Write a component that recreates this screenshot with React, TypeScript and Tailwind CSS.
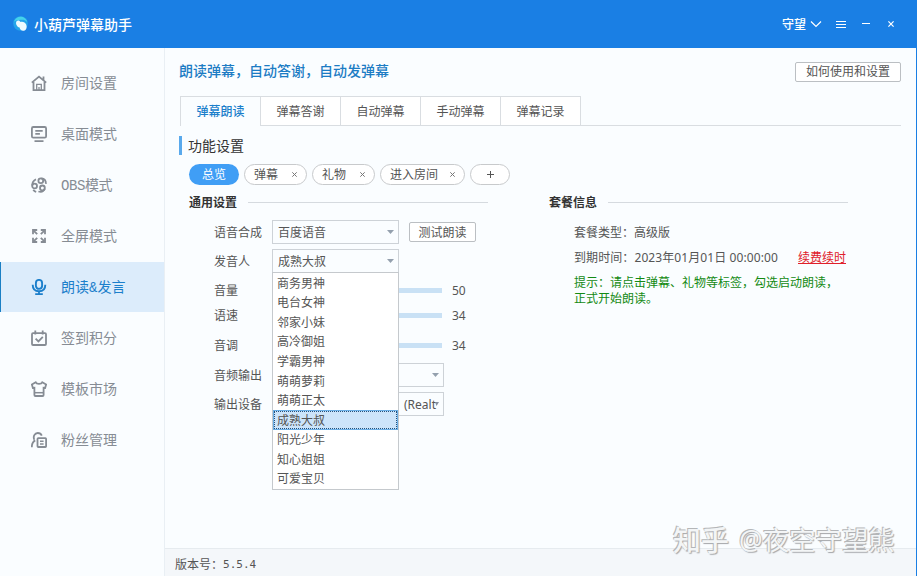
import { ReactNode } from "react";
import clsx from "clsx";

interface MenuItem {
  label: string;
  latin?: boolean;
  icon: ReactNode;
}

interface SelectProps {
  value?: string;
  className?: string;
}

interface RowProps {
  label: string;
  className?: string;
  children?: ReactNode;
}

const TABS = ["弹幕朗读", "弹幕答谢", "自动弹幕", "手动弹幕", "弹幕记录"];

const VOICES = [
  "商务男神",
  "电台女神",
  "邻家小妹",
  "高冷御姐",
  "学霸男神",
  "萌萌萝莉",
  "萌萌正太",
  "成熟大叔",
  "阳光少年",
  "知心姐姐",
  "可爱宝贝",
];

const MENU: MenuItem[] = [
  {
    label: "房间设置",
    icon: (
      <>
        <path d="M.8 7.600 8 1.600l7.200 6M12.500 5V1.500" />
        <path d="M2.500 7v8.100h11V7" />
        <path d="M5.700 15V9.400h4.600V15M8 12v3" strokeWidth="1.300" />
      </>
    ),
  },
  {
    label: "桌面模式",
    icon: (
      <>
        <rect x="0.900" y="1" width="14.200" height="10.600" rx="1.400" />
        <path d="M4.300 4.900h7.400M4.300 7.800h4.600M3.500 15.100h9" />
      </>
    ),
  },
  {
    label: "OBS模式",
    latin: true,
    icon: (
      <>
        <circle cx="3.600" cy="9" r="2.400" />
        <path d="M1.200 8.600C1.200 5.400 2.600 3.300 5 2.300" />
        <circle cx="9.800" cy="3.800" r="2.400" />
        <path d="M10.400 1.300c2.900.2 4.600 2.200 4.500 5.600" />
        <circle cx="11.400" cy="10.900" r="2.400" />
        <path d="M13.700 11.800c-1 2.600-3.400 3.600-6.300 2.700" />
        <path d="M2.200 12.800c.9 1 1.800 1.700 3 2" />
      </>
    ),
  },
  {
    label: "全屏模式",
    icon: (
      <>
        <path d="M6.200 2H2v4.200M9.800 2H14v4.200M6.200 14H2V9.800M9.800 14H14V9.800" />
        <path d="m2.300 2.300 3.900 3.900M13.700 2.300 9.800 6.200M2.300 13.700l3.900-3.900M13.700 13.700 9.800 9.800" />
      </>
    ),
  },
  {
    label: "朗读&发言",
    latin: true,
    icon: (
      <>
        <rect x="4.900" y="0.900" width="6.200" height="9" rx="3.100" strokeWidth="1.900" />
        <path d="M1.700 5.800c0 4.300 2.400 6.500 6.300 6.500s6.300-2.200 6.300-6.500M8 12.300V15M4.200 15.100h7.600" strokeWidth="1.900" />
      </>
    ),
  },
  {
    label: "签到积分",
    icon: (
      <>
        <rect x="1" y="3.200" width="14" height="11.800" rx="1" />
        <path d="M4.300.6v4M11.700.6v4M4.600 8.700l2.800 2.700 4.400-4.600" />
      </>
    ),
  },
  {
    label: "模板市场",
    icon: (
      <>
        <path d="M4.700 1.300.9 3.500l1 3.500 1.500-.2v7.200c0 .6.400 1 1 1h7.200c.6 0 1-.4 1-1V6.800l1.500.2 1-3.500-3.800-2.200C10.400 3.300 5.600 3.300 4.700 1.300z" />
        <path d="M3.600 11.700h8.800" strokeWidth="1.500" />
      </>
    ),
  },
  {
    label: "粉丝管理",
    icon: (
      <>
        <path d="M3.200 7.600C1.900 4.300 3.600 1 6.800 1c2 0 3.300 1 4 2.600M4.200 8.400C1.900 9.700.8 12 .8 15.200" />
        <rect x="6.500" y="6.200" width="8.600" height="8.800" rx="0.800" />
        <path d="M9 9.300h3.600M9 12h3.600" strokeWidth="1.400" />
      </>
    ),
  },
];

const Arrow = () => (
  <svg className="shrink-0" width="7" height="4" viewBox="0 0 7 4">
    <path d="M0 0h7L3.500 4z" fill="#94a0ae" />
  </svg>
);

const Select = ({ value, className }: SelectProps) => (
  <div
    className={clsx(
      "flex h-6 items-center justify-between border border-[#cdd2d7] pl-[5px] pr-1",
      className
    )}
  >
    <span className="pt-0.5">{value}</span>
    <Arrow />
  </div>
);

const SliderTrack = () => <div className="h-[5px] w-[170px] bg-[#c9e1f5]" />;

const Row = ({ label, className, children }: RowProps) => (
  <div className={clsx("flex items-center", className)}>
    <span className="w-[58px] shrink-0 pt-0.5">{label}</span>
    {children}
  </div>
);

const GroupTitle = ({ children }: { children: ReactNode }) => (
  <div className="flex h-[18px] items-center gap-[11px]">
    <span className="pt-0.5 font-bold text-[#333]">{children}</span>
    <span className="h-px w-[240px] bg-[#d5dadf]" />
  </div>
);

const Tag = ({ label, className }: { label: string; className: string }) => (
  <div
    className={clsx(
      "flex h-[21px] items-center justify-between rounded-full border border-[#c8cacc] bg-white pl-[9px] pr-[9px]",
      className
    )}
  >
    <span className="pt-px">{label}</span>
    <svg width="5" height="5" viewBox="0 0 5 5" stroke="#777" strokeWidth="1">
      <path d="m.3.3 4.400 4.400M4.700.3.3 4.700" />
    </svg>
  </div>
);

const Header = () => (
  <header className="flex h-12 shrink-0 items-center justify-between bg-[#1a7fe4] pl-[13px] pr-[23px] text-white">
    <div className="flex items-center gap-[5px]">
      <svg width="16" height="16" viewBox="0 0 16 16">
        <circle cx="7.500" cy="7.500" r="7.300" fill="#25a4ea" />
        <path d="M1 5.500C2 2.500 4.800.8 7.500.8c3.300 0 6 2 6.700 5.200-2-2.200-4.200-2.500-6.200-2.200C5 4.200 3 4.200 1 5.500z" fill="#45d3ea" />
        <path d="M3.600 5.200c1.300-1.300 3.300-.7 3.900.8 2-.8 4.800.2 5.800 2.700 1 2.800 0 5.300-2.200 6-2.400.6-4.300-1.100-4.500-3.200C3.900 11 2.100 7.200 3.600 5.200z" fill="#eefaff" />
      </svg>
      <span className="pt-0.5 text-sm font-medium">小葫芦弹幕助手</span>
    </div>
    <div className="flex items-center">
      <span className="pt-px text-xs font-medium">守望</span>
      <svg className="ml-1" width="12" height="8" viewBox="0 0 12 8" fill="none" stroke="#fff" strokeWidth="1.200">
        <path d="m1 1.500 5 5 5-5" />
      </svg>
      <svg className="ml-[14px]" width="10" height="7" viewBox="0 0 10 7" stroke="#fff" strokeWidth="1">
        <path d="M0 .5h10M0 3.500h10M0 6.500h10" />
      </svg>
      <span className="mb-[2px] ml-4 h-px w-2 bg-white" />
      <svg className="ml-[18px]" width="6" height="6" viewBox="0 0 6 6" stroke="#fff" strokeWidth="1.200">
        <path d="m.4.4 5.200 5.200M5.600.4.4 5.600" />
      </svg>
    </div>
  </header>
);

const Sidebar = () => (
  <nav className="flex w-[165px] shrink-0 flex-col gap-px border-r border-[#e9eff4] pt-[10px]">
    {MENU.map((item, index) => {
      const active = index === 4;
      return (
        <div
          key={item.label}
          className={clsx(
            "flex h-[50px] items-center gap-[14px] border-l pl-[30px] text-sm",
            active
              ? "border-[#1a7fc4] bg-[#dcecfb] text-[#1c7fcb]"
              : "border-transparent text-[#868c94]"
          )}
        >
          <svg width="16" height="16" viewBox="0 0 16 16" fill="none" stroke="currentColor" strokeWidth="1.800">
            {item.icon}
          </svg>
          <span
            className={clsx(
              "whitespace-nowrap",
              item.latin &&
                "pt-px font-['Liberation_Mono','Noto_Sans_CJK_SC',monospace]",
              item.label === "OBS模式" && "tracking-[-0.4px]"
            )}
          >
            {item.label}
          </span>
        </div>
      );
    })}
  </nav>
);

const VoiceSettings = () => (
  <div className="w-[300px]">
    <GroupTitle>通用设置</GroupTitle>
    <div className="flex flex-col pl-[25px]">
      <Row label="语音合成" className="mt-[9px] h-6">
        <Select value="百度语音" className="w-[127px]" />
        <button className="ml-[10px] h-5 w-[67px] rounded-[2px] border border-[#bbbfc3] bg-white pt-px leading-[18px]">
          测试朗读
        </button>
      </Row>
      <Row label="发音人" className="mt-[5px] h-6">
        <div className="relative">
          <Select value="成熟大叔" className="w-[127px]" />
          <div className="absolute left-0 top-[23px] z-10 w-[127px] border border-[#c5c9cd] bg-white">
            {VOICES.map((voice) => (
              <div
                key={voice}
                className={clsx(
                  "flex h-[19.600px] items-center pl-1",
                  voice === "成熟大叔"
                    ? "border border-[#6aaee6] bg-[#cce4fa] pl-[3px] pt-[3px] outline-1 -outline-offset-2 outline-dotted outline-[#24507a]"
                    : "pt-[1.500px]"
                )}
              >
                {voice}
              </div>
            ))}
          </div>
        </div>
      </Row>
      <Row label="音量" className="mt-2 h-[18px]">
        <SliderTrack />
        <span className="ml-[10px] pt-0.5">50</span>
      </Row>
      <Row label="语速" className="mt-[7px] h-[18px]">
        <SliderTrack />
        <span className="ml-[10px] pt-0.5">34</span>
      </Row>
      <Row label="音调" className="mt-3 h-[18px]">
        <SliderTrack />
        <span className="ml-[10px] pt-0.5">34</span>
      </Row>
      <Row label="音频输出" className="mt-[9px] h-6">
        <Select className="w-[172px]" />
      </Row>
      <Row label="输出设备" className="mt-[5px] h-6">
        <div className="flex h-6 w-[172px] items-center justify-end border border-[#cdd2d7] pr-1">
          <span className="whitespace-nowrap pt-0.5">(Realt</span>
          <svg className="-ml-px" width="4" height="5" viewBox="0 0 4 5">
            <path d="M0 0h4L1.500 4z" fill="#8590a0" />
          </svg>
        </div>
      </Row>
    </div>
  </div>
);

const PlanInfo = () => (
  <div className="ml-[60px] w-[300px]">
    <GroupTitle>套餐信息</GroupTitle>
    <div className="pl-[25px]">
      <p className="mt-[13px] leading-[18px]">套餐类型：高级版</p>
      <p className="mt-[7px] flex leading-[18px]">
        <span className="w-[224px] tracking-[0.09px]">
          到期时间：2023年01月01日 00:00:00
        </span>
        <a className="text-[#e0202a] underline">续费续时</a>
      </p>
      <p className="mt-2 whitespace-nowrap leading-4 text-[#138a13]">
        提示：请点击弹幕、礼物等标签，勾选启动朗读，
        <br />
        正式开始朗读。
      </p>
    </div>
  </div>
);

export default function App() {
  return (
    <div className="relative flex h-[576px] w-[917px] flex-col overflow-hidden bg-[#fafdff] font-['Noto_Sans','Noto_Sans_CJK_SC',sans-serif] text-xs text-[#555]">
      <Header />
      <div className="flex min-h-0 flex-1 border-r border-[#1a7fe4]">
        <Sidebar />
        <div className="flex flex-1 flex-col">
          <main className="flex-1 pl-[15px] pr-[15px]">
            <div className="flex h-12 items-center justify-between">
              <h1 className="-ml-px pb-0.5 text-sm font-medium text-[#1c7cc4]">
                朗读弹幕，自动答谢，自动发弹幕
              </h1>
              <button className="mb-px h-5 w-[106px] rounded-[2px] border border-[#bbbfc3] bg-white leading-[18px]">
                如何使用和设置
              </button>
            </div>
            <div className="flex h-[30px] border-l border-[#d9dde1]">
              {TABS.map((tab, index) => (
                <div
                  key={tab}
                  className={clsx(
                    "flex w-20 items-center justify-center border-r border-t border-[#d9dde1]",
                    index === 0
                      ? "pt-px font-medium text-[#1c7fcb]"
                      : "border-b bg-white pt-0.5"
                  )}
                >
                  {tab}
                </div>
              ))}
              <div className="flex-1 border-b border-[#d9dde1]" />
            </div>
            <div className="-ml-px mt-[10px] flex h-[19px] items-center gap-[6px]">
              <span className="h-[19px] w-[3px] bg-[#59a9ec]" />
              <h2 className="text-sm text-[#333]">功能设置</h2>
            </div>
            <div className="mt-[9px] flex gap-[5px] pl-[9px]">
              <div className="flex h-[21px] w-[50px] items-center justify-center rounded-full bg-[#409ef5] pt-px text-white">
                总览
              </div>
              <Tag label="弹幕" className="w-[63px]" />
              <Tag label="礼物" className="w-[63px]" />
              <Tag label="进入房间" className="w-[85px]" />
              <div className="flex h-[21px] w-10 items-center justify-center rounded-full border border-[#c8cacc] bg-white">
                <svg width="7" height="7" viewBox="0 0 7 7" stroke="#555">
                  <path d="M3.500 0v7M0 3.500h7" />
                </svg>
              </div>
            </div>
            <div className="mt-2 flex pl-[9px]">
              <VoiceSettings />
              <PlanInfo />
            </div>
          </main>
          <footer className="flex h-7 items-center border-t border-[#e6ebef] bg-[#f4f7fa] pl-[10px] pt-1">
            <span>版本号：</span>
            <span className="pt-px font-['DejaVu_Sans_Mono',monospace] text-[11px]">
              5.5.4
            </span>
          </footer>
        </div>
      </div>
      <div className="absolute left-[673px] top-[520px] flex gap-[10px] whitespace-nowrap leading-10 text-[#f3f5f6] [text-shadow:-1px_-1px_0_#b4b6b8,1px_1px_1px_#a4a6a9]">
        <span className="text-[28px] font-medium">知乎</span>
        <span className="text-[26.400px]">@夜空守望熊</span>
      </div>
    </div>
  );
}
